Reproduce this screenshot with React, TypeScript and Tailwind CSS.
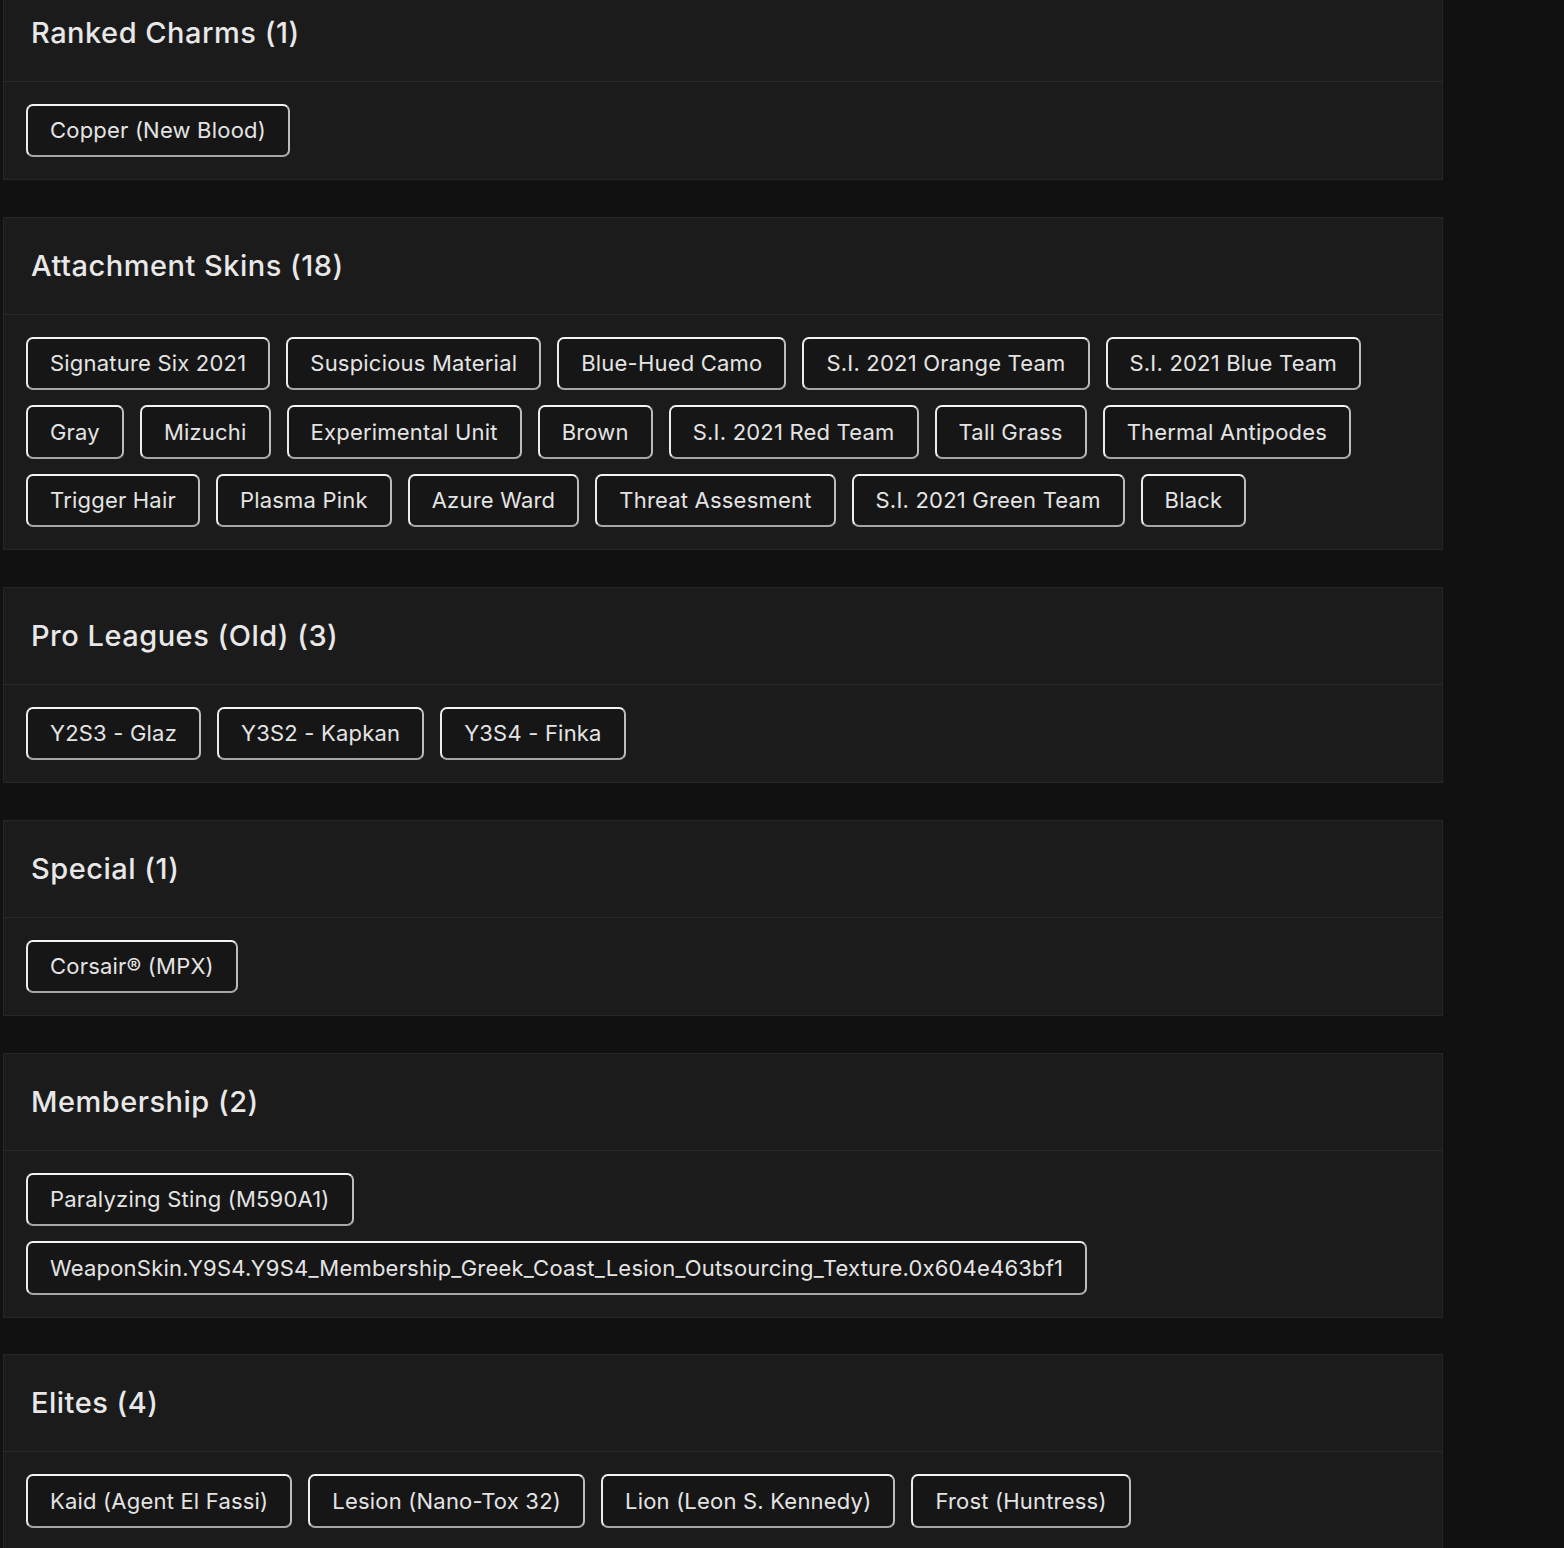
const sections: { title: string; items: string[] }[] = [
  { title: 'Ranked Charms (1)', items: ['Copper (New Blood)'] },
  {
    title: 'Attachment Skins (18)',
    items: [
      'Signature Six 2021',
      'Suspicious Material',
      'Blue-Hued Camo',
      'S.I. 2021 Orange Team',
      'S.I. 2021 Blue Team',
      'Gray',
      'Mizuchi',
      'Experimental Unit',
      'Brown',
      'S.I. 2021 Red Team',
      'Tall Grass',
      'Thermal Antipodes',
      'Trigger Hair',
      'Plasma Pink',
      'Azure Ward',
      'Threat Assesment',
      'S.I. 2021 Green Team',
      'Black',
    ],
  },
  { title: 'Pro Leagues (Old) (3)', items: ['Y2S3 - Glaz', 'Y3S2 - Kapkan', 'Y3S4 - Finka'] },
  { title: 'Special (1)', items: ['Corsair® (MPX)'] },
  {
    title: 'Membership (2)',
    items: [
      'Paralyzing Sting (M590A1)',
      'WeaponSkin.Y9S4.Y9S4_Membership_Greek_Coast_Lesion_Outsourcing_Texture.0x604e463bf1',
    ],
  },
  {
    title: 'Elites (4)',
    items: ['Kaid (Agent El Fassi)', 'Lesion (Nano-Tox 32)', 'Lion (Leon S. Kennedy)', 'Frost (Huntress)'],
  },
];

function Chip({ label }: { label: string }) {
  return (
    <span className="inline-flex h-[53.5px] items-center rounded-[7px] border-2 border-t-[#f4f4f4] border-l-[#ececec] border-r-[#bcbcbc] border-b-[#a6a6a6] bg-[#161616] px-[22px] text-[22px] leading-none tracking-[0.2px] text-[#e4e4e4] whitespace-nowrap">
      {label}
    </span>
  );
}

function Section({ title, items, first }: { title: string; items: string[]; first?: boolean }) {
  return (
    <section className={`border border-[#262626] bg-[#1b1b1b] ${first ? 'mt-[-16.5px]' : ''}`}>
      <div className="flex h-[97px] items-center border-b border-[#2a2a2a] px-[27px]">
        <h2 className="text-[29px] font-medium tracking-[0.5px] text-[#e8e8e8]">{title}</h2>
      </div>
      <div className="flex flex-wrap gap-x-[16px] gap-y-[15px] px-[22px] py-[22px]">
        {items.map((it) => (
          <Chip key={it} label={it} />
        ))}
      </div>
    </section>
  );
}

export default function App() {
  return (
    <div
      className="h-[1548px] overflow-hidden bg-[#111111]"
      style={{ fontFamily: 'Inter, "Noto Sans", sans-serif' }}
    >
      <div className="flex w-[1443px] flex-col gap-[36.5px] pl-[3px]">
        {sections.map((s, i) => (
          <Section key={s.title} title={s.title} items={s.items} first={i === 0} />
        ))}
      </div>
    </div>
  );
}
